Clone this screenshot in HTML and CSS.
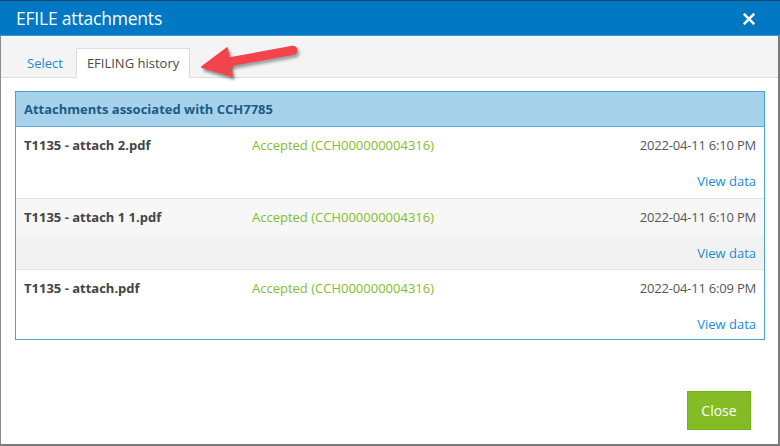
FILE: index.html
```html
<!DOCTYPE html>
<html>
<head>
<meta charset="utf-8">
<link rel="stylesheet" href="styles.css">
</head>
<body>
<div class="dialog">
  <div class="titlebar">
    <span class="title">EFILE attachments</span>
    <svg class="close-x" width="11" height="11" viewBox="0 0 11 11"><path d="M1.5 1.5 L9.5 9.5 M9.5 1.5 L1.5 9.5" stroke="#fff" stroke-width="2.4" stroke-linecap="square"/></svg>
  </div>
  <div class="body">
    <div class="tabs">
      <span class="tab">Select</span>
      <span class="tab active">EFILING history</span>
    </div>
    <div class="content">
      <div class="panel">
        <div class="panel-head">Attachments associated with CCH7785</div>
        <div class="row">
          <div class="line">
            <span class="name">T1135 - attach 2.pdf</span>
            <span class="status">Accepted (CCH000000004316)</span>
            <span class="date">2022-04-11 6:10 PM</span>
          </div>
          <div class="line2"><span class="link">View data</span></div>
        </div>
        <div class="row alt">
          <div class="line">
            <span class="name">T1135 - attach 1 1.pdf</span>
            <span class="status">Accepted (CCH000000004316)</span>
            <span class="date">2022-04-11 6:10 PM</span>
          </div>
          <div class="line2"><span class="link">View data</span></div>
        </div>
        <div class="row last">
          <div class="line">
            <span class="name">T1135 - attach.pdf</span>
            <span class="status">Accepted (CCH000000004316)</span>
            <span class="date">2022-04-11 6:09 PM</span>
          </div>
          <div class="line2"><span class="link">View data</span></div>
        </div>
      </div>
    </div>
    <div class="footer">
      <button class="btn">Close</button>
    </div>
  </div>
  <svg class="arrow" width="780" height="100" viewBox="0 0 780 100">
    <defs>
      <filter id="blur" x="-20%" y="-50%" width="140%" height="200%"><feGaussianBlur stdDeviation="1.6"/></filter>
    </defs>
    <g transform="translate(2,3)" fill="rgba(0,0,0,0.35)" stroke="rgba(0,0,0,0.35)" filter="url(#blur)">
      <line x1="226" y1="62.5" x2="293" y2="50.3" stroke-width="9" stroke-linecap="round"/>
      <polygon points="202,67 227,48.2 232,75.8" stroke-width="2" stroke-linejoin="round"/>
    </g>
    <g fill="#f2444a" stroke="#f2444a">
      <line x1="226" y1="62.5" x2="293" y2="50.3" stroke-width="9" stroke-linecap="round"/>
      <polygon points="202,67 227,48.2 232,75.8" stroke-width="2" stroke-linejoin="round"/>
    </g>
  </svg>
</div>
</body>
</html>
```
FILE: styles.css
```css
html, body {
  margin: 0;
  padding: 0;
  background: #ffffff;
}
body {
  font-family: "Open Sans", "Noto Sans", sans-serif;
  width: 780px;
  height: 446px;
  overflow: hidden;
}
.dialog {
  position: relative;
  width: 780px;
  height: 446px;
  display: flex;
  flex-direction: column;
}
.titlebar {
  height: 36px;
  background: #0078c3;
  border-top: 1px solid #1b4566;
  box-sizing: border-box;
  display: flex;
  align-items: center;
  justify-content: space-between;
  padding: 0 25px 0 16px;
  border-bottom: 1px solid #3f97d2;
}
.title {
  color: #ffffff;
  font-size: 17.5px;
  letter-spacing: -0.2px;
}
.close-x {
  display: block;
  margin-top: 2px;
  width: 12px;
  height: 12px;
}
.body {
  flex: 1;
  display: flex;
  flex-direction: column;
  border-left: 1px solid #8a8a8a;
  border-right: 2px solid #7a7a7a;
  border-bottom: 2px solid #7a7a7a;
}
.tabs {
  height: 42px;
  box-sizing: border-box;
  background: #f4f4f4;
  border-bottom: 1px solid #dcdcdc;
  display: flex;
  align-items: flex-end;
  padding-left: 13px;
}
.tab {
  font-size: 13px;
  color: #1a8ad3;
  padding: 0 12px;
  height: 30px;
  line-height: 28px;
  box-sizing: border-box;
  margin-bottom: -1px;
  border: 1px solid transparent;
}
.tab.active {
  background: #ffffff;
  color: #4a4a4a;
  border: 1px solid #dcdcdc;
  border-bottom-color: #ffffff;
  padding: 0 10px;
}
.content {
  padding: 13px 13px 0 14px;
}
.panel {
  border: 1px solid #4a9fdb;
}
.panel-head {
  background: #a7d2eb;
  height: 34px;
  line-height: 34px;
  border-bottom: 1px solid #5aa8dd;
  padding-left: 8px;
  font-size: 13px;
  font-weight: 700;
  color: #1d5a87;
}
.row {
  height: 71px;
  box-sizing: border-box;
  padding: 8px 8px 0 8px;
  border-top: 1px solid #e2e2e2;
  background: #ffffff;
}
.panel-head + .row {
  border-top: none;
}
.row.last {
  height: 70px;
}
.row.alt {
  background: linear-gradient(#f7f7f7 0, #f7f7f7 36px, #f2f2f2 36px);
}
.line {
  display: flex;
  height: 20px;
  line-height: 20px;
  font-size: 13px;
}
.name {
  width: 228px;
  font-weight: 700;
  color: #454545;
}
.status {
  color: #84bd2b;
  flex: 1;
}
.date {
  color: #575757;
  letter-spacing: -0.2px;
}
.line2 {
  margin-top: 16px;
  height: 20px;
  line-height: 20px;
  text-align: right;
  font-size: 13px;
}
.link {
  color: #1a8ad3;
}
.footer {
  flex: 1;
  display: flex;
  justify-content: flex-end;
  align-items: flex-end;
  padding: 0 27px 14px 0;
}
.btn {
  width: 64px;
  height: 39px;
  background: #84bc26;
  border: 1px solid #78b01c;
  color: #ffffff;
  font-family: "Open Sans", "Noto Sans", sans-serif;
  font-size: 14px;
  padding: 0;
}
.arrow {
  position: absolute;
  left: 0;
  top: 0;
  pointer-events: none;
}
```
